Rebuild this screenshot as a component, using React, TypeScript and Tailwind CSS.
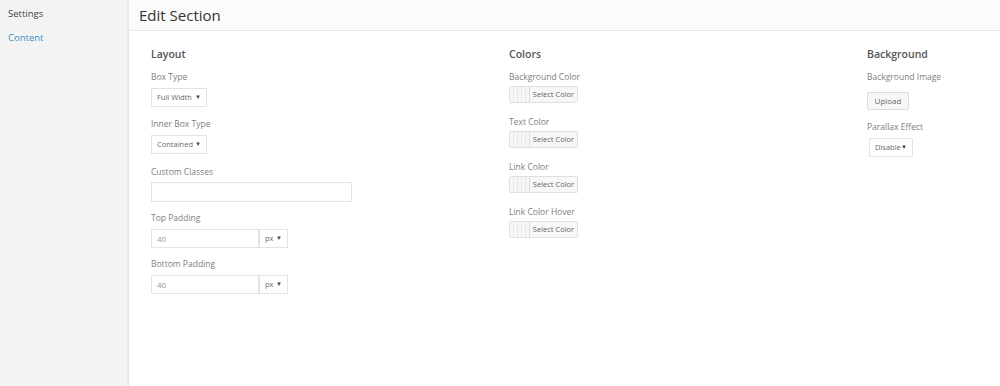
const font = { fontFamily: '"Open Sans", "Noto Sans", sans-serif' };

function Label({ children }: { children: React.ReactNode }) {
  return <div className="whitespace-nowrap text-[8.5px] leading-[12px] text-[#808080]">{children}</div>;
}

function Select({ value, w }: { value: string; w: string }) {
  return (
    <div className={`flex h-[19px] ${w} items-center justify-between whitespace-nowrap border border-[#e3e3e3] bg-white pl-[5px] pr-[5px] text-[7.5px] text-[#6a6a6a]`}>
      <span>{value}</span>
      <span className="text-[6px] text-[#444]">▼</span>
    </div>
  );
}

function ColorPicker() {
  return (
    <div className="flex h-[17px] w-[69px] rounded-[2px] border border-[#e0e0e0] bg-[#f7f7f7]">
      <div className="w-[20px] border-r border-[#dcdcdc] bg-[repeating-linear-gradient(90deg,#f7f7f7_0px,#f7f7f7_3px,#e9e9e9_3px,#e9e9e9_4px)]" />
      <div className="flex flex-1 items-center justify-center whitespace-nowrap text-[7.5px] text-[#666]">Select Color</div>
    </div>
  );
}

function NumberField() {
  return (
    <div className="flex">
      <div className="flex h-[19px] w-[108px] items-center border border-[#e3e3e3] pl-[5px] text-[8px] text-[#999]">40</div>
      <Select value="px" w="w-[29px]" />
    </div>
  );
}

export default function App() {
  return (
    <div className="flex h-[386px] w-[1000px] bg-white" style={font}>
      <aside className="w-[129px] shrink-0 border-r-2 border-[#e8e8e8] bg-[#f3f3f3] pl-[8px] pt-[8px] text-[9.5px]">
        <div className="leading-[12px] text-[#444]">Settings</div>
        <div className="mt-[12px] leading-[12px] text-[#3a8fc4]">Content</div>
      </aside>
      <main className="flex-1">
        <header className="flex h-[31px] items-center border-b border-[#e6e6e6] bg-[#fbfbfb] pl-[10px] text-[15px] text-[#333]">
          Edit Section
        </header>
        <div className="grid grid-cols-[358px_358px_1fr] pl-[22px] pt-[16px]">
          <section>
            <h2 className="text-[10.5px] leading-[14px] font-semibold text-[#555]">Layout</h2>
            <div className="mt-[10px]">
              <Label>Box Type</Label>
              <div className="mt-[5px]"><Select value="Full Width" w="w-[56px]" /></div>
            </div>
            <div className="mt-[11px]">
              <Label>Inner Box Type</Label>
              <div className="mt-[5px]"><Select value="Contained" w="w-[56px]" /></div>
            </div>
            <div className="mt-[12px]">
              <Label>Custom Classes</Label>
              <div className="mt-[4px] h-[20px] w-[201px] border border-[#e3e3e3]" />
            </div>
            <div className="mt-[10px]">
              <Label>Top Padding</Label>
              <div className="mt-[5px]"><NumberField /></div>
            </div>
            <div className="mt-[10px]">
              <Label>Bottom Padding</Label>
              <div className="mt-[5px]"><NumberField /></div>
            </div>
          </section>
          <section>
            <h2 className="text-[10.5px] leading-[14px] font-semibold text-[#555]">Colors</h2>
            <div className="mt-[10px]">
              <Label>Background Color</Label>
              <div className="mt-[3px]"><ColorPicker /></div>
            </div>
            {["Text Color", "Link Color", "Link Color Hover"].map((l) => (
              <div key={l} className="mt-[13px]">
                <Label>{l}</Label>
                <div className="mt-[3px]"><ColorPicker /></div>
              </div>
            ))}
          </section>
          <section>
            <h2 className="text-[10.5px] leading-[14px] font-semibold text-[#555]">Background</h2>
            <div className="mt-[10px]">
              <Label>Background Image</Label>
              <div className="mt-[9px] flex h-[18px] w-[42px] items-center justify-center rounded-[2px] border border-[#dcdcdc] bg-[#f7f7f7] text-[8px] text-[#666]">Upload</div>
            </div>
            <div className="mt-[11px]">
              <Label>Parallax Effect</Label>
              <div className="mt-[5px] ml-[2px]"><Select value="Disable" w="w-[44px]" /></div>
            </div>
          </section>
        </div>
      </main>
    </div>
  );
}
